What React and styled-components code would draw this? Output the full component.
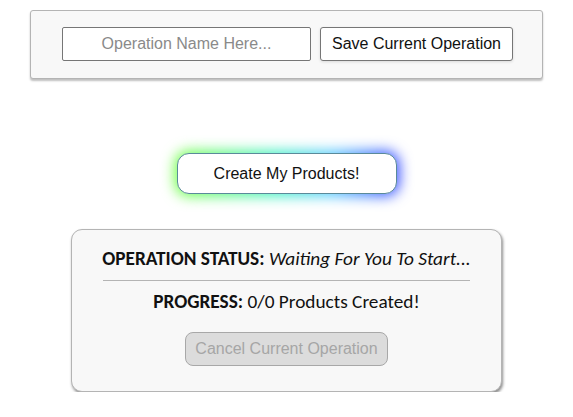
import styled, { createGlobalStyle } from "styled-components";

const GlobalStyle = createGlobalStyle`
  body {
    margin: 0;
    background: #fff;
    font-family: "Liberation Sans", Arial, sans-serif;
  }
`;

const Page = styled.div`
  width: 573px;
  padding-top: 10px;
  display: flex;
  flex-direction: column;
  align-items: center;
`;

const SaveBar = styled.div`
  width: 513px;
  height: 69px;
  box-sizing: border-box;
  background: #f8f8f8;
  border: 1px solid #b4b4b4;
  border-radius: 3px;
  box-shadow: 0 2px 2px rgba(0, 0, 0, 0.25);
  display: flex;
  align-items: center;
  justify-content: center;
  gap: 9px;
  padding-bottom: 2px;
  padding-left: 2px;
`;

const NameInput = styled.input`
  width: 249px;
  height: 34px;
  box-sizing: border-box;
  border: 1px solid #767676;
  border-radius: 2px;
  font-family: "Liberation Sans", Arial, sans-serif;
  font-size: 16px;
  text-align: center;
  background: #fff;
  &::placeholder {
    color: #8a8a8a;
  }
`;

const PlainButton = styled.button`
  height: 34px;
  box-sizing: border-box;
  padding: 0 11px;
  border: 1px solid #767676;
  border-radius: 3px;
  background: #fff;
  color: #111;
  font-family: "Liberation Sans", Arial, sans-serif;
  font-size: 16px;
  box-shadow: 0 1px 3px rgba(0, 0, 0, 0.12);
`;

const GlowWrap = styled.div`
  position: relative;
  margin-top: 74px;
  width: 220px;
  height: 41px;
  &::before {
    content: "";
    position: absolute;
    inset: -2px;
    border-radius: 14px;
    background: linear-gradient(90deg, #6cff3a, #38f0c0 45%, #4fc8ff 70%, #2a3cff);
    filter: blur(7px);
  }
`;

const CreateButton = styled.button`
  position: relative;
  width: 100%;
  height: 100%;
  box-sizing: border-box;
  border: 1px solid #5a8a9a;
  border-radius: 12px;
  background: #fff;
  color: #111;
  font-family: "Liberation Sans", Arial, sans-serif;
  font-size: 16px;
`;

const StatusCard = styled.div`
  margin-top: 35px;
  width: 431px;
  height: 163px;
  box-sizing: border-box;
  background: #f8f8f8;
  border: 1px solid #b4b4b4;
  border-radius: 11px;
  box-shadow: 1px 2px 3px rgba(0, 0, 0, 0.45);
  padding: 17px 31px 0;
  display: flex;
  flex-direction: column;
  align-items: center;
`;

const StatusLine = styled.div`
  font-family: Carlito, Lato, "Open Sans", sans-serif;
  font-size: 19.3px;
  color: #111;
  line-height: 24px;
  white-space: nowrap;
  b {
    font-weight: 700;
  }
  i {
    font-style: italic;
  }
`;

const Divider = styled.hr`
  width: 100%;
  border: none;
  border-top: 1px solid #b4b4b4;
  margin: 9px 0 9px;
`;

const CancelButton = styled.button`
  margin-top: 18px;
  width: 203px;
  height: 34px;
  border: 1px solid #a8a8a8;
  border-radius: 8px;
  background: #dcdcdc;
  color: #a6a6a6;
  font-family: "Liberation Sans", Arial, sans-serif;
  font-size: 16px;
`;

export default function App() {
  return (
    <>
      <GlobalStyle />
      <Page>
        <SaveBar>
          <NameInput placeholder="Operation Name Here..." />
          <PlainButton>Save Current Operation</PlainButton>
        </SaveBar>
        <GlowWrap>
          <CreateButton>Create My Products!</CreateButton>
        </GlowWrap>
        <StatusCard>
          <StatusLine>
            <b>OPERATION STATUS:</b> <i>Waiting For You To Start...</i>
          </StatusLine>
          <Divider />
          <StatusLine>
            <b>PROGRESS:</b> 0/0 Products Created!
          </StatusLine>
          <CancelButton disabled>Cancel Current Operation</CancelButton>
        </StatusCard>
      </Page>
    </>
  );
}
